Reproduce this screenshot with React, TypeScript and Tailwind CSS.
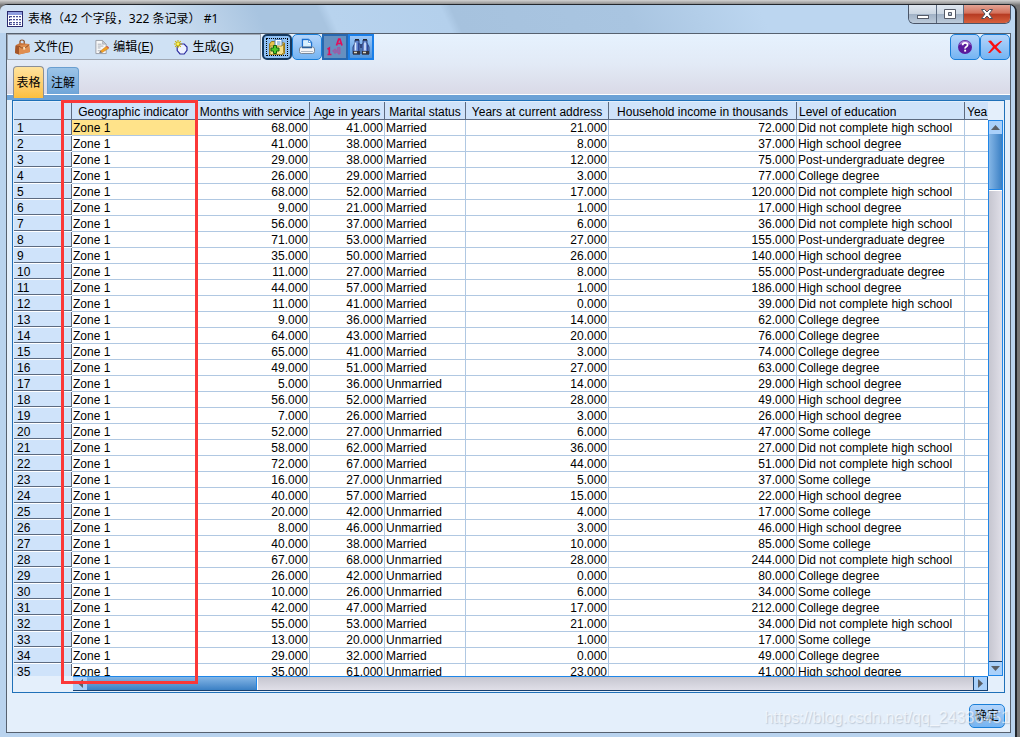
import React, { useState } from 'react';

interface RecordRow {
  months: number;
  age: number;
  marital: string;
  years: number;
  income: number;
  education: string;
}

const M = 'Married';
const U = 'Unmarried';
const NONE = 'Did not complete high school';
const HIGH = 'High school degree';
const SOME = 'Some college';
const COLLEGE = 'College degree';
const POST = 'Post-undergraduate degree';

const data: [number, number, string, number, number, string][] = [
  [68, 41, M, 21, 72, NONE],
  [41, 38, M, 8, 37, HIGH],
  [29, 38, M, 12, 75, POST],
  [26, 29, M, 3, 77, COLLEGE],
  [68, 52, M, 17, 120, NONE],
  [9, 21, M, 1, 17, HIGH],
  [56, 37, M, 6, 36, NONE],
  [71, 53, M, 27, 155, POST],
  [35, 50, M, 26, 140, HIGH],
  [11, 27, M, 8, 55, POST],
  [44, 57, M, 1, 186, HIGH],
  [11, 41, M, 0, 39, NONE],
  [9, 36, M, 14, 62, COLLEGE],
  [64, 43, M, 20, 76, COLLEGE],
  [65, 41, M, 3, 74, COLLEGE],
  [49, 51, M, 27, 63, COLLEGE],
  [5, 36, U, 14, 29, HIGH],
  [56, 52, M, 28, 49, HIGH],
  [7, 26, M, 3, 26, HIGH],
  [52, 27, U, 6, 47, SOME],
  [58, 62, M, 36, 27, NONE],
  [72, 67, M, 44, 51, NONE],
  [16, 27, U, 5, 37, SOME],
  [40, 57, M, 15, 22, HIGH],
  [20, 42, U, 4, 17, SOME],
  [8, 46, U, 3, 46, HIGH],
  [40, 38, M, 10, 85, SOME],
  [67, 68, U, 28, 244, NONE],
  [26, 42, U, 0, 80, COLLEGE],
  [10, 26, U, 6, 34, SOME],
  [42, 47, M, 17, 212, COLLEGE],
  [55, 53, M, 21, 34, NONE],
  [13, 20, U, 1, 17, SOME],
  [29, 32, M, 0, 49, COLLEGE],
  [35, 61, U, 23, 41, HIGH],
];

const rows: RecordRow[] = data.map(([months, age, marital, years, income, education]) => ({
  months, age, marital, years, income, education,
}));

const columns = [
  'Geographic indicator',
  'Months with service',
  'Age in years',
  'Marital status',
  'Years at current address',
  'Household income in thousands',
];

/* ---------- Icons ---------- */

const GridIcon = () => (
  <svg width="16" height="16" viewBox="0 0 16 16" shapeRendering="crispEdges">
    <rect x="0" y="0" width="16" height="16" fill="#2b2b6e" />
    <rect x="1" y="1" width="14" height="3" fill="#8f9fe0" />
    <rect x="1" y="4" width="14" height="11" fill="#fff" />
    <path d="M2 5h3v2H2zM6 5h2v2H6zM9 5h2v2H9zM12 5h2v2h-2zM2 8h3v2H2zM6 8h2v2H6zM9 8h2v2H9zM12 8h2v2h-2zM2 11h3v3H2zM6 11h2v3H6zM9 11h2v3H9zM12 11h2v3h-2z" fill="#4a4f90" />
    <path d="M3 6h2M6 6.500h2M9 6.500h2M3 9.500h2M6 9.500h2M9 9.500h2M3 12.500h2M6 12.500h2M9 12.500h2M12 6.500h2M12 9.500h2M12 12.500h2" stroke="#c8cfee" />
  </svg>
);

const BagIcon = () => (
  <svg width="16" height="16" viewBox="0 0 16 16">
    <path d="M6 5V2.200Q6 1 8 1t2.200 1.200V5" fill="none" stroke="#8a4a20" strokeWidth="1.200" />
    <path d="M2 6l4-2 9 1 1 8-11 2.500L1 14z" fill="#c8743c" />
    <path d="M5 6.500l10-1.500 1 8-11 2.500z" fill="#e08e50" />
    <path d="M1.500 6.500L5 7v8.500L1 14z" fill="#a3562a" />
    <path d="M5 7q5 5 10-1.500" fill="none" stroke="#8a4a20" strokeWidth="1" />
    <rect x="9.200" y="8" width="2" height="2.600" fill="#fbe0b8" />
  </svg>
);

const EditIcon = () => (
  <svg width="15" height="16" viewBox="0 0 16 16">
    <path d="M2 1h7l4 4v10H2z" fill="#f8f8f8" stroke="#9a9ea6" />
    <path d="M9 1v4h4z" fill="#c4c9d2" stroke="#9a9ea6" strokeWidth=".6" />
    <path d="M4 5h4M4 7h6M4 9h3M4 12h4" stroke="#a8adb5" />
    <path d="M6.500 12.500L13 7.500l2.400 2.200-6.600 4.100z" fill="#f5a323" stroke="#b8701a" strokeWidth=".5" />
    <path d="M6.500 12.500l-1 1.600 3.300-.3z" fill="#444" />
    <path d="M13 7.500l1.200-.7 1.800 1.800-.6 1.100z" fill="#d1503a" />
  </svg>
);

const GenerateIcon = () => (
  <svg width="14" height="15" viewBox="0 0 14 15">
    <path d="M6 4h4.200L13 7v3.400L10.200 14H6L3.200 10.600V7z" fill="#eef2ff" stroke="#2a2a9e" strokeWidth="1.200" />
    <path d="M4 0v8M0 4h8M1.200 1.200l5.600 5.600M6.800 1.200L1.200 6.800" stroke="#c8b400" strokeWidth="1.100" />
    <circle cx="4" cy="4" r="1.400" fill="#fff35a" />
  </svg>
);

const FolderIcon = () => (
  <svg width="18" height="18" viewBox="0 0 18 18">
    <path d="M1.500 6l2-2.500H6L16.500 5v10.500l-2 1H1.500z" fill="#e9c64e" stroke="#9a7a1c" />
    <path d="M7 1.500h7V11H7z" fill="#fff" stroke="#4f7fb8" />
    <path d="M9 4h3.500M9 6h3.500" stroke="#4f8fd0" />
    <path d="M2 8h12l1.500-2v8.500l-2 2H2z" fill="#f7e08a" stroke="#9a7a1c" strokeWidth=".8" />
    <path d="M5.500 7.500h3V10H11v3H8.500v2.500h-3V13H3v-3h2.500z" fill="#4cc82a" stroke="#186010" />
  </svg>
);

const PrinterIcon = () => (
  <svg width="18" height="18" viewBox="0 0 18 18">
    <path d="M4.500 1.500h6l3 3V10h-9z" fill="#fff" stroke="#1a6fd0" strokeWidth="1.400" />
    <path d="M6 3h4v3h2.500v4H6z" fill="#d5f0ff" />
    <path d="M10.500 1.500v3h3z" fill="#fff" stroke="#2f7fd0" strokeWidth=".7" />
    <rect x="1.500" y="9" width="15" height="6.500" rx="2" fill="#f4f6f8" stroke="#78889a" />
    <path d="M4 9.500h10" stroke="#2a5f98" strokeWidth="1.500" />
    <path d="M3 13.500h12" stroke="#b0bac6" />
  </svg>
);

const SortIcon = () => (
  <svg width="18" height="18" viewBox="0 0 18 18" fill="none" stroke="#e0105c">
    <path d="M10.500 7.500L12.700 1h1.200L16 7.500M11.500 5.500h4" strokeWidth="1.700" />
    <path d="M1.500 11.200l1.800-1.200V16.500M1.500 16.500h4" strokeWidth="1.700" />
    <path d="M6.500 13l2.700-2.200V12h2.300V9.500H14V16h-2v-1.700H9.200v1.200z" fill="#8a68b0" stroke="#b0509a" strokeWidth=".8" />
  </svg>
);

const BinocularsIcon = () => (
  <svg width="18" height="18" viewBox="0 0 18 18">
    <path d="M3 2h4v3l1 2v9H1V9l2-4z" fill="#5f82cc" stroke="#26386c" strokeWidth=".9" />
    <path d="M11 2h4v3l2 4v7h-7V7l1-2z" fill="#5f82cc" stroke="#26386c" strokeWidth=".9" />
    <path d="M3.500 4.500v8M13 4.500v8" stroke="#dbe8ff" strokeWidth="1.600" />
    <path d="M6.500 5v8M15.500 7v6" stroke="#2e489a" />
    <rect x="8" y="6" width="2" height="4" fill="#31477e" />
    <path d="M1 13h7v3.500H1zM10 13h7v3.500h-7z" fill="#33323c" />
    <path d="M2 14.500h3M11 14.500h3" stroke="#d8d8c8" strokeWidth="1.400" />
    <path d="M3 1.700h4M11 1.700h4" stroke="#22242e" strokeWidth="1.400" />
  </svg>
);

const HelpIcon = () => (
  <svg width="16" height="16" viewBox="0 0 16 16">
    <circle cx="8" cy="8" r="7" fill="#5a1a9c" />
    <path d="M2 6a6.400 6.400 0 0 1 12 0q-6-3-12 0z" fill="#a07ad0" />
    <path d="M5.600 6.300q0-2.500 2.500-2.500t2.500 2.200q0 1-1.300 1.800T8.100 9.700" fill="none" stroke="#fff" strokeWidth="1.700" />
    <rect x="7.200" y="10.700" width="1.900" height="1.900" fill="#fff" />
  </svg>
);

const CrossIcon = () => (
  <svg width="16" height="14" viewBox="0 0 16 14">
    <path d="M1 1l3-.5L8 5.200 13.500 1h1.800L9.500 7l5.300 5.500-2.300.8L7.600 8.500 3 13H1l5-6.200z" fill="#fa0f0f" />
  </svg>
);

/* ---------- Window chrome ---------- */

const TitleBar = () => (
  <header className="h-[28px] flex items-start justify-between pl-[7px] pr-[4px] rounded-t-md bg-[linear-gradient(65deg,#cfe0f2_0%,#d6e5f5_14%,#a8c4e0_26%,#a8c4e0_32%,#b8d3ee_33%,#b4d0ec_44%,#a6c2de_45%,#a9c5e1_62%,#bcd6f0_75%,#bcd6f0_100%)]">
    <div className="flex items-center gap-[5px] pt-[5px]">
      <GridIcon />
      <h1 className="font-['Noto_Sans','Noto_Sans_CJK_SC',sans-serif] text-[12px] leading-[18px]">表格（42 个字段，322 条记录） #1</h1>
    </div>
    <div className="flex h-[19px] rounded-b-md border border-t-0 border-[#4a5568] overflow-hidden">
      <button aria-label="最小化" className="w-[28px] flex items-center justify-center border-r border-[#5a6a80] bg-[linear-gradient(#dfe7f0_0%,#cbd6e2_48%,#9fb0c4_50%,#bccbdb_100%)]">
        <svg width="14" height="12" viewBox="0 0 14 12"><rect x="1.500" y="7.500" width="11" height="3" fill="#fff" stroke="#555b68" /></svg>
      </button>
      <button aria-label="最大化" className="w-[27px] flex items-center justify-center border-r border-[#5a6a80] bg-[linear-gradient(#dfe7f0_0%,#cbd6e2_48%,#9fb0c4_50%,#bccbdb_100%)]">
        <svg width="13" height="11" viewBox="0 0 13 11"><path d="M.5.5h11v9H.5zM4.500 3.500h3v3h-3z" fill="#fff" stroke="#555b68" fillRule="evenodd" /></svg>
      </button>
      <button aria-label="关闭" className="w-[46px] flex items-center justify-center bg-[linear-gradient(#e3a394_0%,#d3705a_46%,#b53a22_50%,#d8603c_100%)]">
        <svg width="14" height="12" viewBox="0 0 14 12"><path d="M1.500 1.500h3L7 4l2.500-2.500h3L9 6l3.500 4.500h-3L7 8l-2.500 2.500h-3L5 6z" fill="#fff" stroke="#4a4f5c" /></svg>
      </button>
    </div>
  </header>
);

const MenuItem = ({ icon, label, hotkey }: { icon: React.ReactNode; label: string; hotkey: string }) => (
  <button className="flex items-center gap-[4px] text-[12px]">
    {icon}
    <span>{label}(<u>{hotkey}</u>)</span>
  </button>
);

const roundButton = 'w-[30px] h-[26px] flex items-center justify-center rounded-[5px] border border-[#1a7fd8] bg-linear-to-b from-[#b4d5fb] to-[#74b4f2]';

const Toolbar = () => (
  <div className="flex items-start h-[27px]">
    <nav className="h-[26px] w-[254px] flex items-center gap-[21px] pl-[6px] border border-[#a0a8b4] bg-[#cfe1f4]">
      <MenuItem icon={<BagIcon />} label="文件" hotkey="F" />
      <MenuItem icon={<EditIcon />} label="编辑" hotkey="E" />
      <MenuItem icon={<GenerateIcon />} label="生成" hotkey="G" />
    </nav>
    <div className="flex pl-px">
      <button aria-label="导出" className="w-[30px] h-[26px] p-[2px] rounded-[5px] border-2 border-[#16395f] bg-[#8fc0f4]">
        <span className="flex h-full items-center justify-center border border-dotted border-black"><FolderIcon /></span>
      </button>
      <button aria-label="打印" className={roundButton}><PrinterIcon /></button>
      <button aria-label="显示标签" aria-pressed="true" className="w-[26px] h-[26px] flex items-center justify-center border-2 border-[#2768b0] bg-[#6590c0]"><SortIcon /></button>
      <button aria-label="查找" className="w-[26px] h-[26px] flex items-center justify-center border-2 border-[#1a7fe8] bg-linear-to-b from-[#9cc8f8] to-[#4f94dc]"><BinocularsIcon /></button>
    </div>
    <div className="ml-auto flex">
      <button aria-label="帮助" className={roundButton}><HelpIcon /></button>
      <button aria-label="取消" className={roundButton}><CrossIcon /></button>
    </div>
  </div>
);

const Tabs = ({ active, onChange }: { active: string; onChange: (t: string) => void }) => (
  <div role="tablist" className="h-[34px] flex items-end gap-[3px] pl-[6px] border-b border-white">
    {['表格', '注解'].map((t) => (
      <button
        key={t}
        role="tab"
        aria-selected={t === active}
        onClick={() => onChange(t)}
        className={
          t === active
            ? 'relative z-10 -mb-[4px] h-[32px] w-[31px] rounded-t-[4px] border border-b-0 border-[#8a8f98] bg-linear-to-b from-[#ffe39c] to-[#fdbf3c] text-[12px]'
            : 'h-[27px] w-[32px] pt-[4px] rounded-t-[4px] border border-b-0 border-[#6a9fd0] bg-linear-to-b from-[#9cc4e8] to-[#6fa5d8] text-[12px]'
        }
      >
        {t}
      </button>
    ))}
  </div>
);

/* ---------- Data grid ---------- */

const numCell = 'border-r border-b border-[#b0c8e2] pt-px pr-px text-right';
const textCell = 'border-r border-b border-[#b0c8e2] pt-px pl-px text-left';

const DataTable = () => (
  <table className="table-fixed w-[1100px] border-separate border-spacing-0 bg-white text-[12px] leading-[14px] whitespace-nowrap">
    <colgroup>
      <col className="w-[58px]" />
      <col className="w-[124px]" />
      <col className="w-[114px]" />
      <col className="w-[75px]" />
      <col className="w-[81px]" />
      <col className="w-[143px]" />
      <col className="w-[188px]" />
      <col className="w-[168px]" />
      <col />
    </colgroup>
    <thead>
      <tr className="h-[18px] bg-[#cfe3fa]">
        <th className="border-r border-b border-[#5c6a80] p-0"></th>
        {columns.map((c) => (
          <th key={c} scope="col" className="border-r border-b border-[#5c6a80] p-0 pt-[2px] text-center font-normal">{c}</th>
        ))}
        <th scope="col" className="border-r border-b border-[#5c6a80] p-0 pt-[2px] pl-[2px] text-left font-normal">Level of education</th>
        <th scope="col" className="border-b border-[#5c6a80] p-0 pt-[2px] pl-[2px] text-left font-normal">Yea</th>
      </tr>
    </thead>
    <tbody>
      {rows.map((r, i) => (
        <tr key={i} className="h-[16px]">
          <th scope="row" className="border-b border-white p-0 text-left font-normal">
            <div className="h-[15px] border-r border-b border-[#5c6a80] bg-[#cfe3fa] pt-px pl-[3px]">{i + 1}</div>
          </th>
          <td className={i === 0 ? `${textCell} bg-[#ffe38a]` : textCell}>Zone 1</td>
          <td className={numCell}>{r.months.toFixed(3)}</td>
          <td className={numCell}>{r.age.toFixed(3)}</td>
          <td className={textCell}>{r.marital}</td>
          <td className={numCell}>{r.years.toFixed(3)}</td>
          <td className={numCell}>{r.income.toFixed(3)}</td>
          <td className={textCell}>{r.education}</td>
          <td className={textCell}></td>
        </tr>
      ))}
    </tbody>
  </table>
);

const arrowButton = 'shrink-0 flex items-center justify-center bg-[#a9d0fa]';

const VerticalScroll = () => (
  <div className="mt-[18px] flex w-[15px] flex-col border border-[#1f86e8] bg-linear-to-r from-[#c6c6d0] to-[#e0dfe8]">
    <button aria-label="向上" className={`${arrowButton} h-[13px]`}>
      <svg width="9" height="5" viewBox="0 0 9 5"><path d="M4.500 0L9 5H0z" fill="#5a5f66" /></svg>
    </button>
    <div className="h-[56px] border-b border-[#1f86e8] bg-linear-to-r from-[#84b6e6] to-[#3a80c4]" />
    <div className="h-px bg-white" />
    <div className="flex-1" />
    <button aria-label="向下" className={`${arrowButton} h-[14px] border-t border-[#17406e]`}>
      <svg width="9" height="5" viewBox="0 0 9 5"><path d="M0 0h9L4.500 5z" fill="#5a5f66" /></svg>
    </button>
  </div>
);

const HorizontalScroll = () => (
  <div className="ml-[59px] mr-[15px] flex h-[15px] border-t border-b border-t-[#1f86e8] border-b-[#17406e] bg-linear-to-b from-[#c6c6d0] to-[#e0dfe8]">
    <button aria-label="向左" className={`${arrowButton} w-[14px]`}>
      <svg width="5" height="9" viewBox="0 0 5 9"><path d="M5 0v9L0 4.500z" fill="#5a5f66" /></svg>
    </button>
    <div className="w-[170px] border-r border-[#1f86e8] bg-linear-to-b from-[#84b6e6] to-[#3a80c4]" />
    <div className="flex-1 border-l border-white" />
    <button aria-label="向右" className={`${arrowButton} w-[15px] border-l border-r border-[#17406e]`}>
      <svg width="5" height="9" viewBox="0 0 5 9"><path d="M0 0v9l5-4.500z" fill="#5a5f66" /></svg>
    </button>
  </div>
);

const App: React.FC = () => {
  const [tab, setTab] = useState('表格');

  return (
    <div className="h-screen overflow-hidden bg-[#8d8d8d] bg-[linear-gradient(#d2d2d2,#8f8f8f_4px,#777_5px)] pt-[4px] pr-[3px] font-['Liberation_Sans','Noto_Sans_CJK_SC',sans-serif] text-black">
      <div className="flex h-full flex-col rounded-t-lg border-t border-r-2 border-[#22262c] bg-[#b9d3ee]">
        <TitleBar />

        <main className="relative ml-[6px] mr-[4px] mb-[4px] flex min-h-0 flex-1 flex-col border border-[#56616f] bg-[#e4effb]">
          <div className="bg-linear-to-b from-[#e6f2fe] via-[#e2eaf6] to-[#d9d9e6]">
            <Toolbar />
            <Tabs active={tab} onChange={setTab} />
          </div>
          <div className="h-[5px] shrink-0 bg-[#6ca2d6]" />

          {/* Grid panel */}
          <section className="relative mx-[5px] flex min-h-0 flex-1 flex-col border border-[#1f70b8] p-px">
            <div className="flex min-h-0 flex-1">
              <div className="min-w-0 flex-1 overflow-hidden">
                <DataTable />
              </div>
              <VerticalScroll />
            </div>
            <HorizontalScroll />
            {/* Column highlight */}
            <div className="pointer-events-none absolute -top-px bottom-[8px] left-[48px] w-[137px] border-[3px] border-[#fb3838]" />
          </section>

          <footer className="flex h-[39px] shrink-0 items-center justify-end pt-[6px] pr-[5px]">
            <button className="h-[24px] w-[36px] pt-px rounded-[5px] border border-[#1a7fd8] bg-linear-to-b from-[#b4d5fb] to-[#74b4f2] text-[12px]">确定</button>
          </footer>

          <p className="pointer-events-none absolute right-0 bottom-[4px] text-[16px] leading-[20px] text-white/60 [text-shadow:1px_1px_1px_#9aa8b880]">https://blog.csdn.net/qq_24336451</p>
        </main>
      </div>
    </div>
  );
};

export default App;
